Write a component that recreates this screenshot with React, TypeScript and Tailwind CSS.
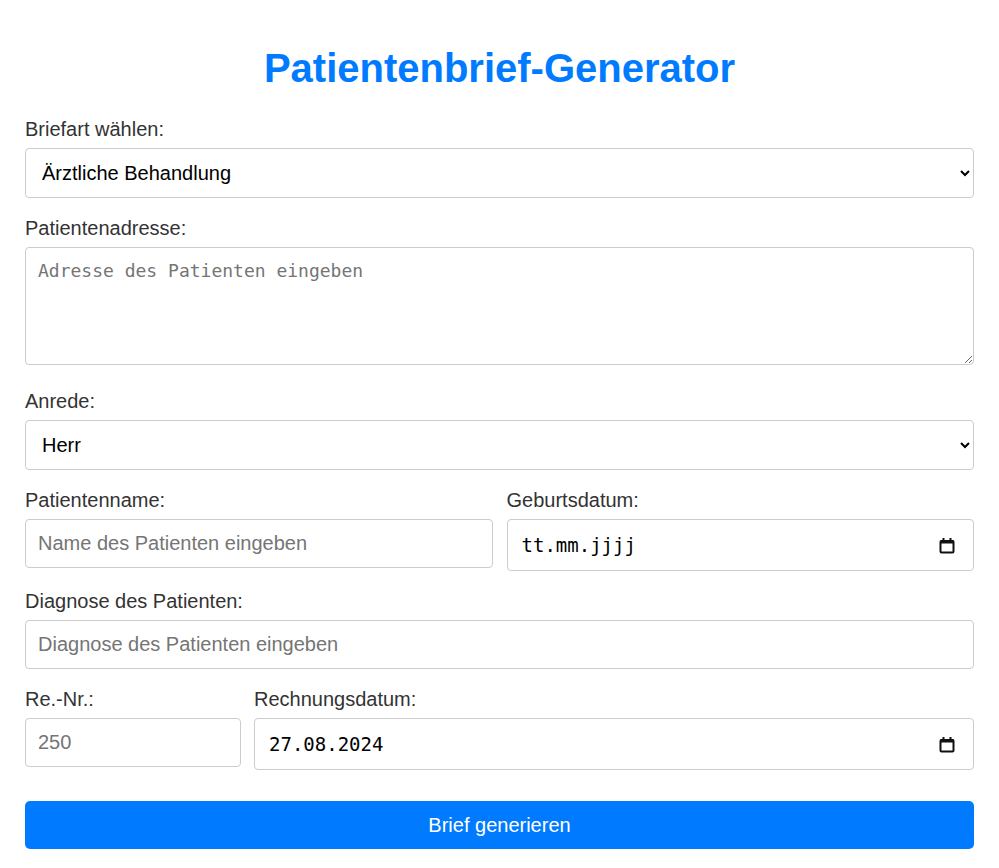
import React from "react";

function CalendarIcon() {
  return (
    <svg width="16" height="17" viewBox="0 0 16 17" className="shrink-0">
      <rect x="1.5" y="4" width="13" height="11.5" rx="1" fill="none" stroke="#111" strokeWidth="2" />
      <rect x="1" y="3.5" width="14" height="3" fill="#111" />
      <rect x="3.5" y="1" width="2" height="3" fill="#111" />
      <rect x="10.5" y="1" width="2" height="3" fill="#111" />
    </svg>
  );
}

function DateField({ value }: { value: string }) {
  return (
    <div className="flex h-[52px] items-center rounded-[4px] border border-[#ccc] bg-white pl-[14px] pr-[18px]">
      <input
        type="text"
        defaultValue={value}
        className="min-w-0 flex-1 bg-transparent text-[19px] text-black outline-none font-['DejaVu_Sans_Mono',monospace]"
      />
      <CalendarIcon />
    </div>
  );
}

const labelCls = "mb-2 block text-[20px] leading-[21px] text-[#333]";
const inputCls =
  "block h-[49px] w-full rounded-[4px] border border-[#ccc] bg-white px-3 text-[20px] text-black outline-none placeholder:text-[#757575]";
const selectCls =
  "block h-[50px] w-full rounded-[4px] border border-[#ccc] bg-white px-3 text-[20px] text-black outline-none";

export default function App() {
  return (
    <div className="min-h-screen bg-white px-[25px] pt-[45px] font-['Liberation_Sans',Arial,sans-serif]">
      <h1 className="text-center text-[40px] font-bold leading-[46px] text-[#007bff]">
        Patientenbrief-Generator
      </h1>

      <form className="mt-[28px] flex flex-col gap-5" onSubmit={(e) => e.preventDefault()}>
        <div>
          <label className={labelCls}>Briefart wählen:</label>
          <select className={selectCls} defaultValue="arzt">
            <option value="arzt">Ärztliche Behandlung</option>
            <option value="rechnung">Rechnung</option>
          </select>
        </div>

        <div className="pb-[6px]">
          <label className={labelCls}>Patientenadresse:</label>
          <textarea
            placeholder="Adresse des Patienten eingeben"
            className="block h-[118px] w-full rounded-[4px] border border-[#ccc] bg-white px-3 py-3 text-[18px] leading-[22px] text-black outline-none placeholder:text-[#757575] font-['DejaVu_Sans_Mono',monospace]"
          />
        </div>

        <div>
          <label className={labelCls}>Anrede:</label>
          <select className={selectCls} defaultValue="herr">
            <option value="herr">Herr</option>
            <option value="frau">Frau</option>
          </select>
        </div>

        <div className="grid grid-cols-2 items-start gap-[14px]">
          <div>
            <label className={labelCls}>Patientenname:</label>
            <input type="text" placeholder="Name des Patienten eingeben" className={inputCls} />
          </div>
          <div>
            <label className={labelCls}>Geburtsdatum:</label>
            <DateField value="tt.mm.jjjj" />
          </div>
        </div>

        <div>
          <label className={labelCls}>Diagnose des Patienten:</label>
          <input type="text" placeholder="Diagnose des Patienten eingeben" className={inputCls} />
        </div>

        <div className="flex items-start gap-[13px]">
          <div className="w-[216px] shrink-0">
            <label className={labelCls}>Re.-Nr.:</label>
            <input type="text" placeholder="250" className={inputCls} />
          </div>
          <div className="flex-1">
            <label className={labelCls}>Rechnungsdatum:</label>
            <DateField value="27.08.2024" />
          </div>
        </div>

        <button
          type="submit"
          className="mt-[11px] h-[48px] w-full rounded-[5px] bg-[#007bff] text-[20px] text-white"
        >
          Brief generieren
        </button>
      </form>
    </div>
  );
}
